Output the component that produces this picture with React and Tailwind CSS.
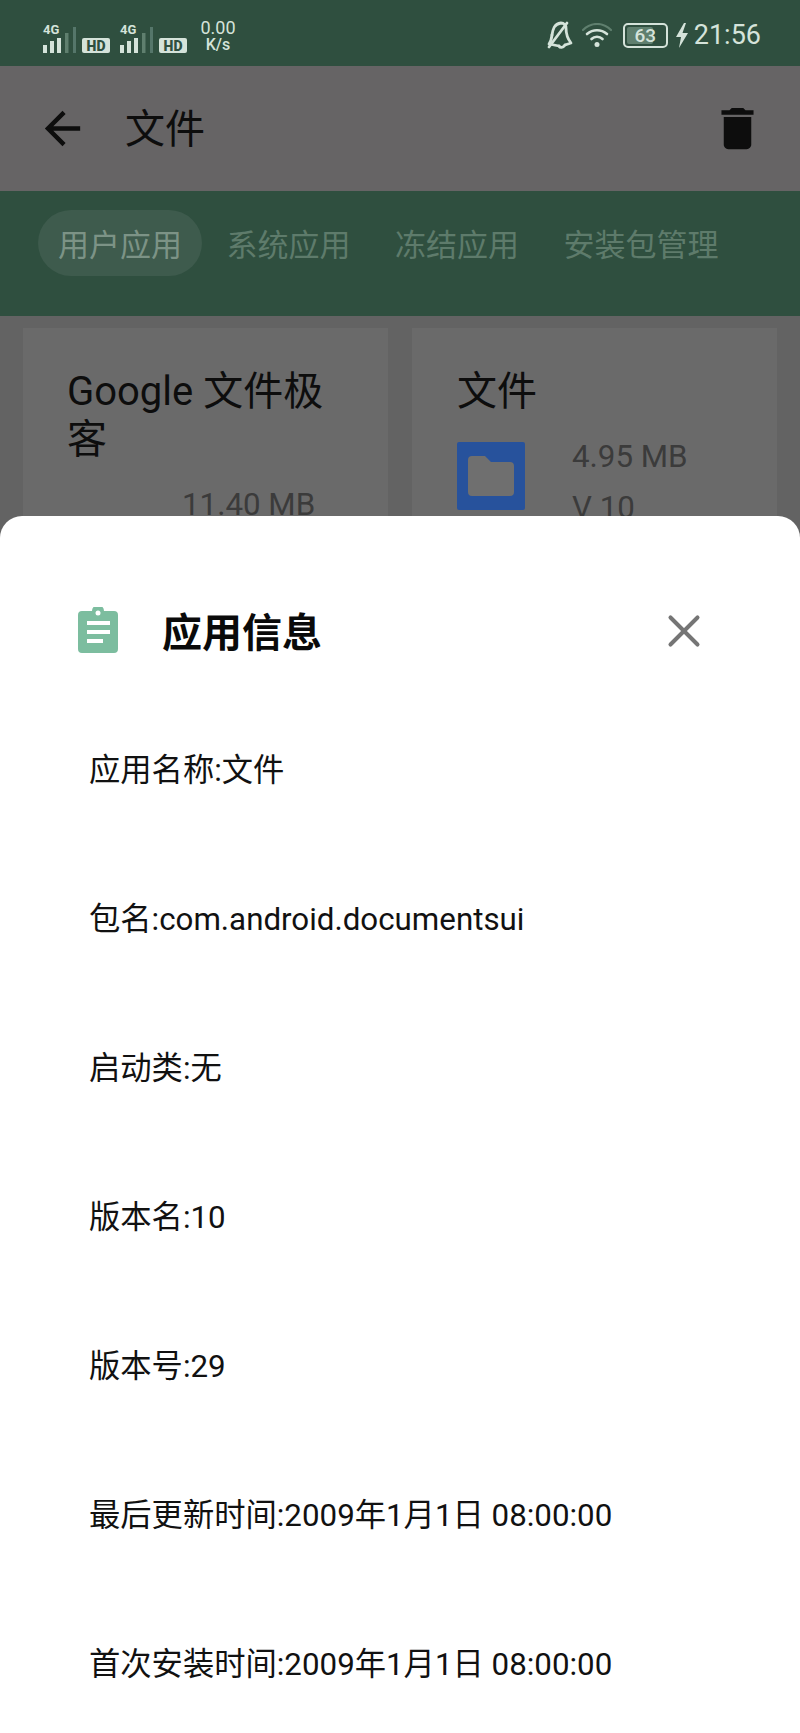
import { X } from 'lucide-react'

const font = { fontFamily: '"Roboto", "Noto Sans CJK SC", sans-serif' }

const rows = [
  '应用名称:文件',
  '包名:com.android.documentsui',
  '启动类:无',
  '版本名:10',
  '版本号:29',
  '最后更新时间:2009年1月1日 08:00:00',
  '首次安装时间:2009年1月1日 08:00:00',
]

// 信号格 + HD
function Signal() {
  return (
    <div className="flex items-end w-[77px] h-[29px] shrink-0">
      <div className="w-[34px] h-[29px] relative">
        <span className="absolute left-0 -top-[1px] text-[13px] leading-[13px] font-bold text-[#d5e3da]">4G</span>
        <svg width="34" height="29" viewBox="0 0 34 29" className="absolute left-0 top-0">
          <rect x="0" y="21" width="4" height="8" fill="#d5e3da" />
          <rect x="7" y="17" width="4" height="12" fill="#d5e3da" />
          <rect x="14" y="14" width="4" height="15" fill="#d5e3da" />
          <rect x="22" y="9" width="3.500" height="20" fill="#5f7f6e" />
          <rect x="30" y="3" width="3" height="26" fill="#55766a" />
        </svg>
      </div>
      <div className="ml-[5px] w-[28px] h-[15px] rounded-[2px] bg-[#d5e3da] flex items-center justify-center text-[14px] leading-none font-black text-[#2f4f3f]">HD</div>
    </div>
  )
}

function StatusBar() {
  return (
    <div className="h-[66px] bg-[#2f4f3f] flex items-start text-[#d5e3da]">
      <div className="flex pl-[43px] pt-[19px] items-end">
        <Signal />
        <Signal />
        <div className="ml-[3px] flex flex-col items-center w-[36px]">
          <span className="text-[18px] leading-[18px]">0.00</span>
          <span className="text-[16px] leading-[16px] font-medium">K/s</span>
        </div>
      </div>
      <div className="ml-auto pr-[39px] pt-[21px] flex items-center">
        <svg width="26" height="28" viewBox="0 0 26 28" fill="none" stroke="#d5e3da" strokeWidth="2.800" strokeLinejoin="round" strokeLinecap="round">
          <path d="M5 14c1-6 2-11 9-12 3 0 5 2 5 5 0 5 1 10 5 15l-6 2" />
          <path d="M20 2L2 26" />
          <path d="M5 14c-.5 4-1.500 7-3 9l10 2" />
          <path d="M12 25c1 2 4 2 6-1" />
        </svg>
        <svg width="30" height="24" viewBox="0 0 30 24" fill="none" strokeLinecap="round" className="ml-[9px]">
          <path d="M1 7c8-8 20-8 28 0" stroke="#5f7f6e" strokeWidth="2.200" />
          <path d="M5 11c6-5 14-5 20 0" stroke="#d5e3da" strokeWidth="2.600" />
          <path d="M9.500 16c3-3 8-3 11 0" stroke="#d5e3da" strokeWidth="2.600" />
          <circle cx="15" cy="21.500" r="2.500" fill="#d5e3da" />
        </svg>
        <div className="ml-[11px] w-[45px] h-[25px] rounded-[5px] border-2 border-[#d5e3da] relative overflow-hidden flex items-center justify-center">
          <div className="absolute left-[2px] top-[2px] bottom-[2px] w-[26px] rounded-[2px] bg-[#5f7f6e]" />
          <span className="relative text-[19px] leading-none font-medium">63</span>
        </div>
        <svg width="12" height="25" viewBox="0 0 12 25" className="ml-[8px]">
          <path d="M8 0L0 14h5L3 25l9-15H6.500L10 0z" fill="#d5e3da" />
        </svg>
        <span className="ml-[6px] text-[27px] leading-none">21:56</span>
      </div>
    </div>
  )
}

function AppBar() {
  return (
    <div className="h-[125px] bg-[#666465] flex items-center pl-[36px] pr-[35px]">
      <svg width="53" height="53" viewBox="0 0 24 24" fill="#0d0d0d">
        <path d="M20 11H7.830l5.590-5.590L12 4l-8 8 8 8 1.410-1.410L7.830 13H20v-2z" />
      </svg>
      <span className="ml-[36px] mt-[3px] text-[40px] leading-none text-[#0d0d0d]">文件</span>
      <svg width="55" height="55" viewBox="0 0 24 24" fill="#0d0d0d" className="ml-auto">
        <path d="M6 19c0 1.100.9 2 2 2h8c1.100 0 2-.9 2-2V7H6v12zM19 4h-3.500l-1-1h-5l-1 1H5v2h14V4z" />
      </svg>
    </div>
  )
}

function Tabs() {
  const tabs = ['用户应用', '系统应用', '冻结应用', '安装包管理']
  return (
    <div className="h-[125px] bg-[#2f4f3f] flex items-start pl-[38px] pt-[19px] gap-[4.500px]">
      {tabs.map((t, i) => (
        <div key={t} className={`h-[66px] px-[20px] pt-[5px] rounded-full flex items-center text-[31px] leading-none ${i === 0 ? 'bg-[#3e5b4d] text-[#7c9386]' : 'text-[#5e7b6b]'}`}>
          {t}
        </div>
      ))}
    </div>
  )
}

function Cards() {
  return (
    <div className="bg-[#636363] flex gap-[24px] pl-[23px] pt-[12px] h-[1417px]">
      <div className="w-[365px] h-[400px] bg-[#6a6a6a] pl-[44px] pr-[40px] pt-[40px]">
        <div className="text-[40px] leading-[48px] text-[#0d0d0d]">Google 文件极客</div>
        <div className="mt-[16px] pl-[115px] text-[31.300px] leading-[50px] text-[#3b3b3b]">11.40 MB</div>
      </div>
      <div className="w-[365px] h-[400px] bg-[#6a6a6a] pl-[45px] pt-[40px]">
        <div className="text-[40px] leading-[48px] text-[#0d0d0d]">文件</div>
        <div className="mt-[26px] flex">
          <div className="w-[68px] h-[68px] rounded-[2px] bg-[#27529c] flex items-center justify-center">
            <svg width="46" height="40" viewBox="0 0 46 40">
              <path d="M4 0h13l6 6h19a4 4 0 0 1 4 4v26a4 4 0 0 1-4 4H4a4 4 0 0 1-4-4V4a4 4 0 0 1 4-4z" fill="#6f6f6f" />
            </svg>
          </div>
          <div className="ml-[47px] -mt-[11px] text-[31.300px] leading-[51px] text-[#3b3b3b]">
            <div>4.95 MB</div>
            <div>V 10</div>
          </div>
        </div>
      </div>
    </div>
  )
}

export default function App() {
  return (
    <div className="relative w-[800px] h-[1733px] overflow-hidden" style={font}>
      <StatusBar />
      <AppBar />
      <Tabs />
      <Cards />

      {/* 底部弹层 */}
      <div className="absolute left-0 right-0 top-[516px] bottom-0 bg-white rounded-t-[22px]">
        <div className="h-[180px] flex items-start pl-[78px] pr-[89px] pt-[91px]">
          <svg width="40" height="46" viewBox="0 0 40 46" className="shrink-0">
            <path d="M4 4h10a6 6 0 0 1 12 0h10a4 4 0 0 1 4 4v34a4 4 0 0 1-4 4H4a4 4 0 0 1-4-4V8a4 4 0 0 1 4-4z" fill="#7cbd9f" />
            <circle cx="20" cy="6" r="2.500" fill="#fff" />
            <rect x="9" y="14" width="23" height="4" fill="#fff" />
            <rect x="9" y="23" width="23" height="4" fill="#fff" />
            <rect x="9" y="32" width="16" height="4" fill="#fff" />
          </svg>
          <span className="ml-[44px] mt-[2px] text-[40px] leading-[50px] font-bold text-[#0a0a0a]">应用信息</span>
          <X size={54} strokeWidth={1.8} color="#757575" className="ml-auto shrink-0 -mt-[3px]" />
        </div>
        {rows.map((r) => (
          <div key={r} className="h-[149px] pl-[89px] flex items-center text-[31.300px] leading-none text-[#111111] whitespace-nowrap">
            {r}
          </div>
        ))}
      </div>
    </div>
  )
}
